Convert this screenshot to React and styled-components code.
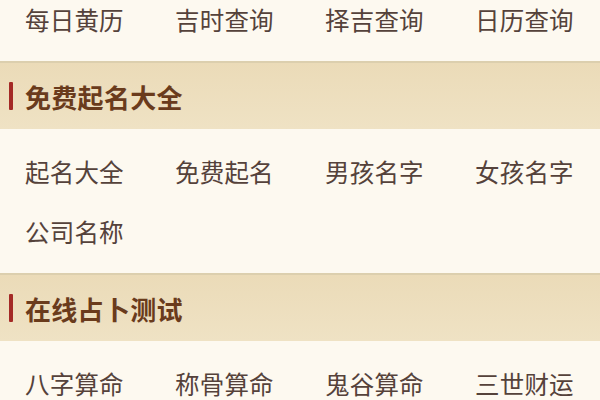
import React from 'react';
import styled, { createGlobalStyle } from 'styled-components';

const GlobalStyle = createGlobalStyle`
  html, body {
    margin: 0;
    padding: 0;
    background: #fdf9f0;
    overflow: hidden;
  }
  body {
    font-family: "Noto Sans CJK SC", "Noto Sans", sans-serif;
  }
`

const sections = [
  { title: null, items: ['每日黄历', '吉时查询', '择吉查询', '日历查询'] },
  { title: '免费起名大全', items: ['起名大全', '免费起名', '男孩名字', '女孩名字', '公司名称'] },
  { title: '在线占卜测试', items: ['八字算命', '称骨算命', '鬼谷算命', '三世财运'] },
]

function App() {
  return (
    <Page>
      <GlobalStyle />
      { sections.map((section, i) => (
        <Section key={i}>
          { section.title && (
            <Header>
              <Mark />
              <Title>{ section.title }</Title>
            </Header>
          ) }
          <Grid>
            { section.items.map(item => <Item key={item}>{ item }</Item>) }
          </Grid>
        </Section>
      )) }
    </Page>
  )
}

const Page = styled.div`
  width: 600px;
  margin-top: -23px;
  background: #fdf9f0;
`

const Section = styled.div`
  display: flex;
  flex-direction: column;
`

const Header = styled.div`
  height: 66px;
  display: flex;
  align-items: center;
  background: linear-gradient(#ebdbb8, #efe2c4);
  border-top: 2px solid #dccfae;
`

const Mark = styled.div`
  width: 4px;
  height: 28px;
  margin-left: 9px;
  margin-right: 12px;
  background: #a42a26;
  border-radius: 1px;
`

const Title = styled.div`
  font-size: 26px;
  font-weight: 600;
  color: #6a3b1c;
  letter-spacing: 0.3px;
`

const Grid = styled.div`
  display: grid;
  grid-template-columns: repeat(4, 150px);
  grid-auto-rows: 60px;
  padding: 12px 0;
`

const Item = styled.div`
  display: flex;
  align-items: center;
  padding-left: 25px;
  font-size: 24.5px;
  color: #55423b;
  letter-spacing: 0.2px;
`

export default App;
